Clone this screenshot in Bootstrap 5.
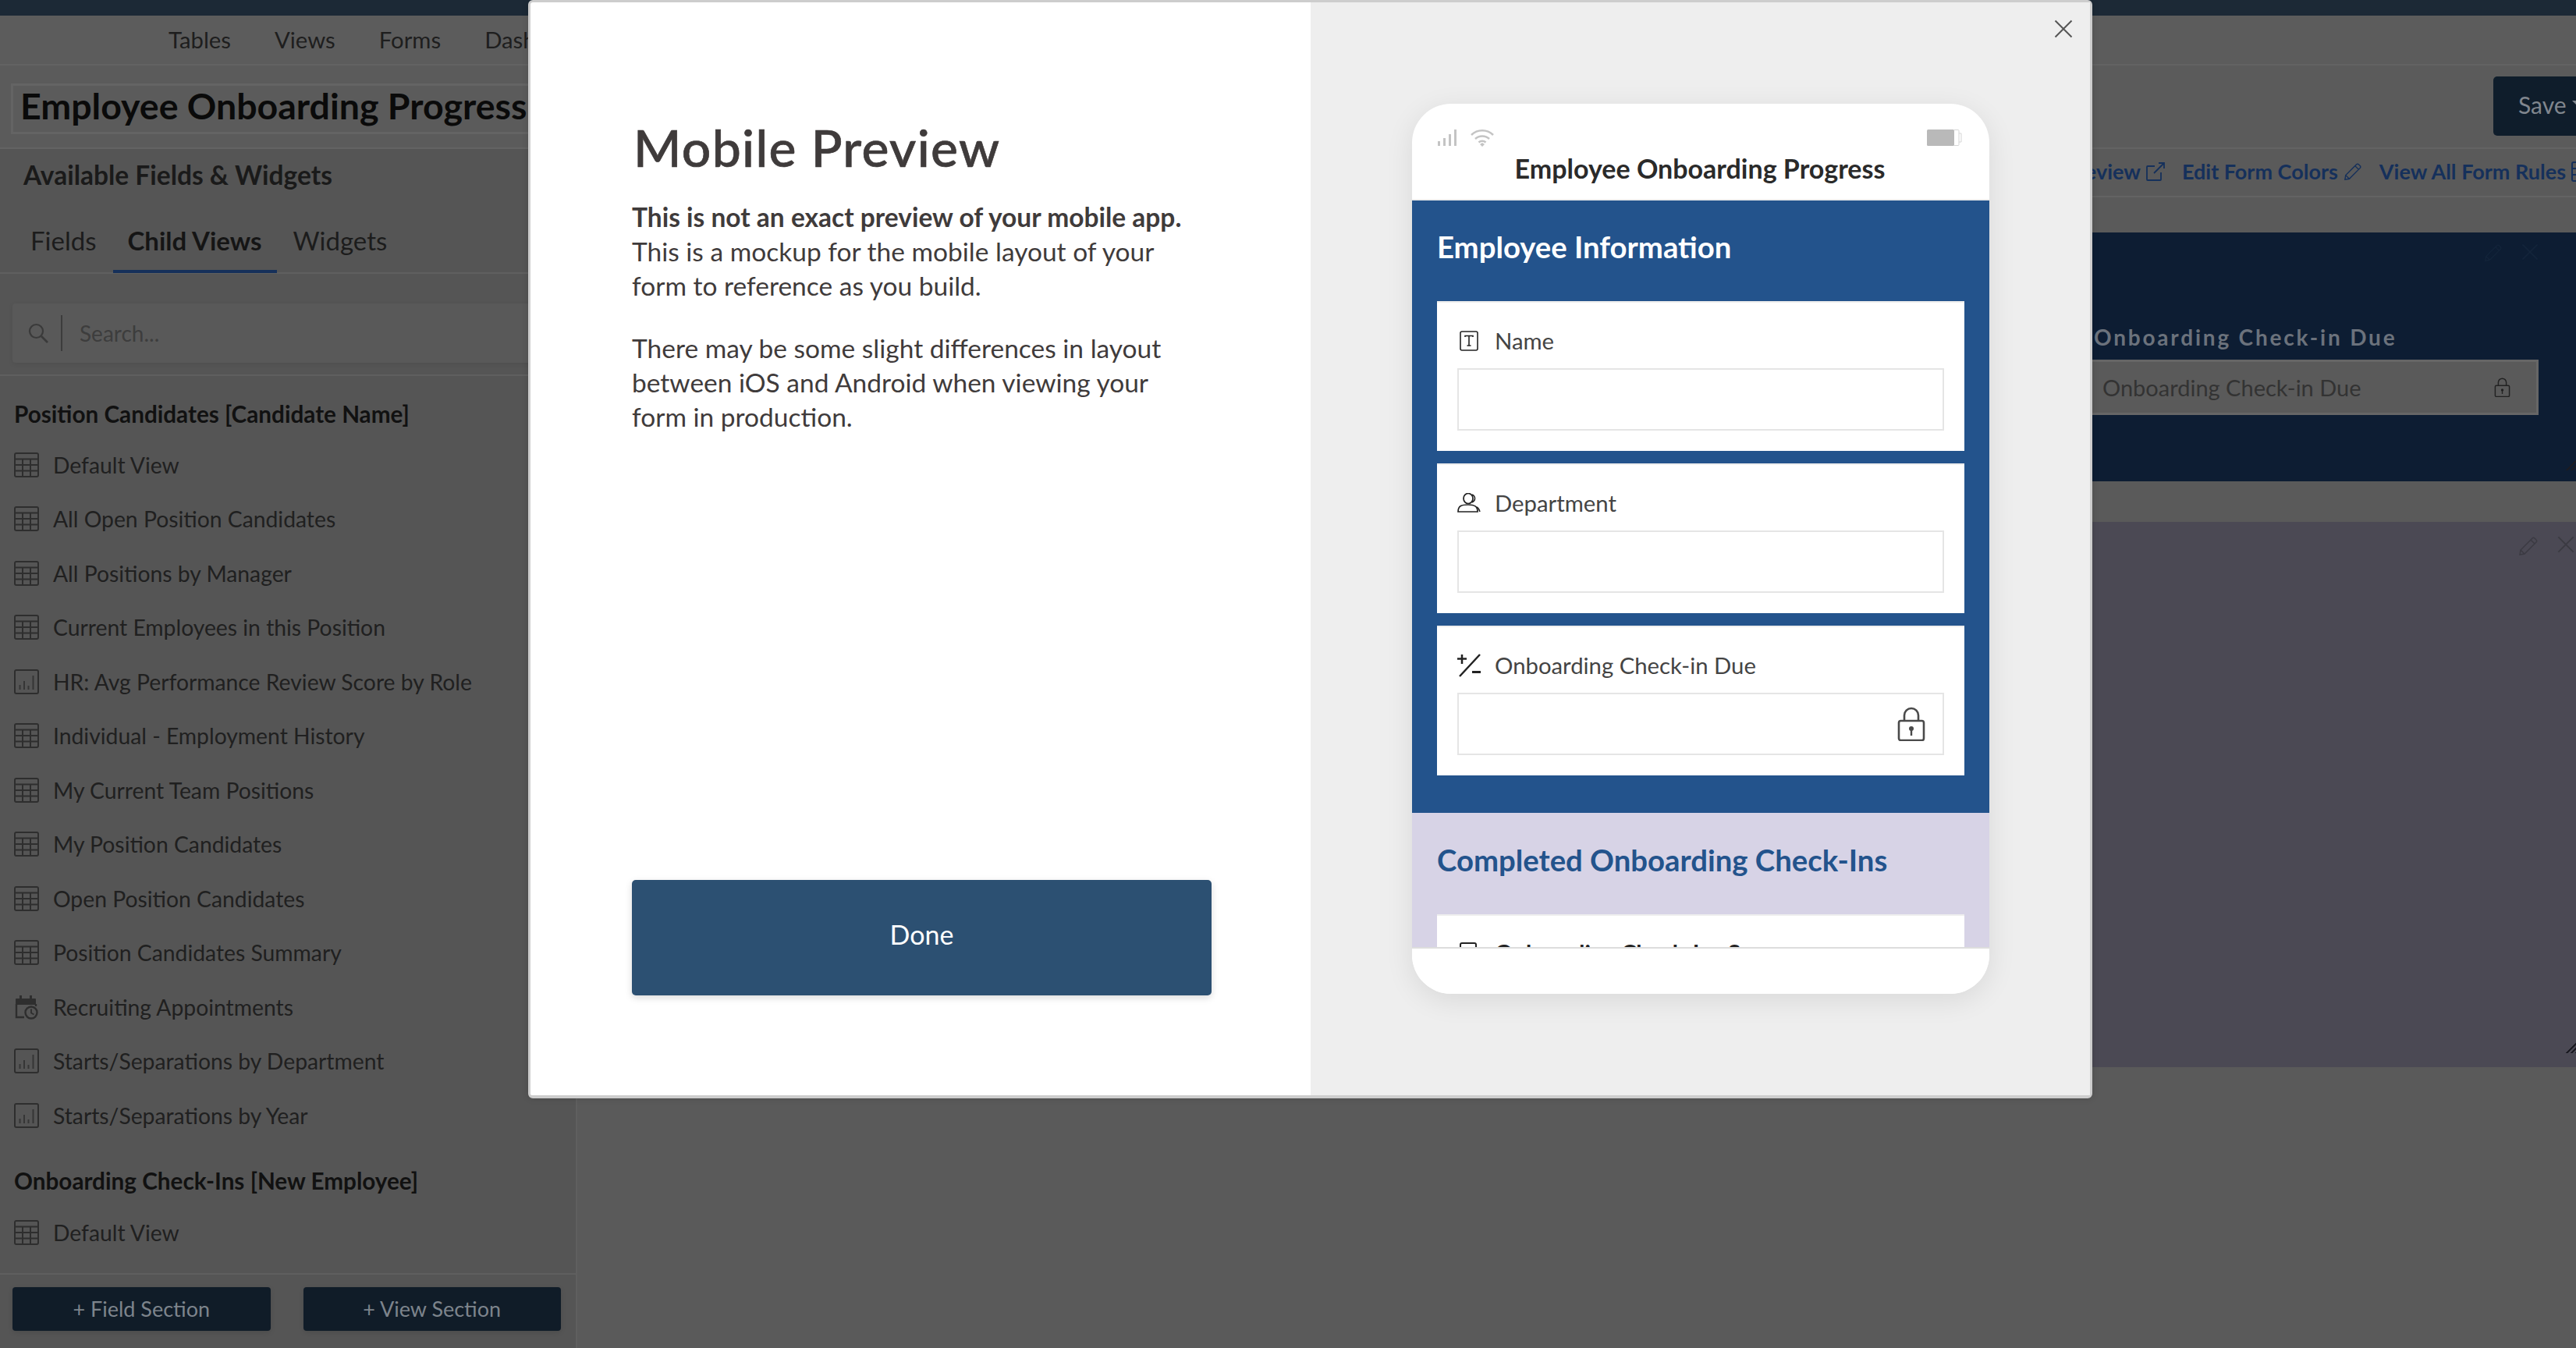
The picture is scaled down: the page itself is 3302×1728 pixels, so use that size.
<!DOCTYPE html>
<html lang="en">
  <head>
    <meta charset="UTF-8" />
    <meta name="viewport" content="width=device-width, initial-scale=1.0" />
    <title>Employee Onboarding Progress - Mobile Preview</title>
    <link rel="stylesheet" href="https://cdn.jsdelivr.net/npm/bootstrap@5.3.6/dist/css/bootstrap.min.css" />
    <style>
      body { margin: 0; background: #5a5a5a; font-family: "Lato", "Liberation Sans", sans-serif; }
      .app-shell { position: relative; width: 3302px; height: 1728px; overflow: hidden; background: #5a5a5a; }
      .top-strip { height: 20px; background: #1c2936; }
      .main-links { height: 64px; padding-left: 216px; gap: 56px; background: #5c5c5c; border-bottom: 2px solid #636363; font-size: 29.300px; color: #1e1e1e; }
      .title-row { height: 107px; border-bottom: 2px solid #636363; background: #5b5b5b; }
      .title-box { width: 900px; height: 65px; margin: 23px 0 0 14px; padding-left: 9px; border: 3px solid #646464; font-size: 46.500px; line-height: 51px; font-weight: 700; color: #0a0a0a; white-space: nowrap; }
      .save-btn { width: 130px; height: 76px; margin: 14px -24px 0 auto; padding: 0 0 3px 32px; text-align: left; border: 0; border-radius: 5px; background: #0f1d2b; color: #80868e; font-size: 30px; }
      .side-panel { width: 740px; flex: none; background: #555; border-right: 2px solid #5f5f5f; }
      .panel-title { height: 70px; line-height: 67px; padding-left: 30px; margin: 0; font-size: 33.500px; font-weight: 700; color: #1a1a1a; }
      .tab-strip { height: 90px; padding: 29px 0 0 20px; border-bottom: 2px solid #5f5f5f; gap: 2px; }
      .tab-link { height: 60px; padding: 0 19px; font-size: 33px; line-height: 37px; color: #1c1c1c; text-decoration: none; }
      .tab-link.is-active { font-weight: 700; color: #151515; border-bottom: 4px solid #16305a; }
      .search-area { height: 131px; padding: 38px 19px 0 16px; border-bottom: 2px solid #5f5f5f; }
      .search-box { height: 76px; background: #595959; border-radius: 4px; box-shadow: 0 2px 6px rgba(0,0,0,.08); color: #3d3d3d; font-size: 28px; }
      .search-box svg { margin-left: 20px; }
      .search-sep { width: 2px; height: 46px; margin: 0 22px 0 16px; background: #3c3c3c; }
      .field-list { padding: 29px 0 0 18px; overflow: hidden; }
      .group-head { height: 40px; line-height: 40px; margin: 0 0 10px; font-size: 29.700px; font-weight: 700; color: #111; }
      .group-head.is-next { margin: 29px 0 12px; }
      .field-row { height: 69.500px; gap: 18px; font-size: 28.300px; color: #202020; }
      .panel-foot { height: 96px; padding: 16px 19px 0 16px; border-top: 2px solid #5f5f5f; gap: 42px; }
      .foot-btn { flex: 1; height: 56px; padding: 0; border: 0; border-radius: 4px; background: #101c28; color: #7d848c; font-size: 27px; box-shadow: 0 2px 6px rgba(0,0,0,.12); }
      .work-area { min-width: 0; padding-left: 20px; }
      .link-bar { height: 62px; margin-left: -20px; margin-right: -18px; padding-bottom: 2px; border-bottom: 2px solid #636363; font-size: 27px; font-weight: 700; color: #15305b; }
      .link-bar span { margin-left: 22px; }
      .link-bar svg { margin-left: 7px; }
      .dark-band { position: relative; height: 319px; margin-top: 45px; padding: 0 48px 0 0; background: #0d1d33; }
      .band-tools { height: 113px; padding: 14px 0 0; gap: 24px; color: #13243a; }
      .band-field { width: 580px; }
      .band-label { height: 50px; padding-left: 10px; font-size: 28px; font-weight: 700; letter-spacing: 2.800px; color: #6b727c; }
      .band-input { height: 71px; padding: 0 33px 0 18px; background: #5a5a5a; border: 3px solid #666; font-size: 29px; color: #333; }
      .purple-band { position: relative; height: 699px; margin-top: 52px; padding: 18px 2px 0 0; background: #4b4954; color: #3b3a42; }
      .grip { position: absolute; width: 15px; height: 15px; background: repeating-linear-gradient(135deg, #1b1b22 0 2px, transparent 2px 4px); clip-path: polygon(100% 0, 100% 100%, 0 100%); }
      .grip-one { right: 0; bottom: 18px; }
      .grip-two { right: 0; bottom: 14px; }
      .preview-modal { position: absolute; left: 677px; top: 0; width: 2005px; height: 1408px; border: 3px solid #cdcdcd; border-bottom-width: 4px; border-radius: 6px; background: #fff; color: #3f3b3b; box-shadow: 0 0 8px rgba(0,0,0,.15); }
      .intro-col { width: 1000px; flex: none; padding: 143px 127px 128px 130px; }
      .intro-title { margin: 0 0 24px 2px; font-size: 66px; line-height: 86px; font-weight: 500; letter-spacing: 1.300px; color: #3f3b3b; -webkit-text-stroke: .7px #3f3b3b; }
      .intro-text { width: 725px; margin: 0 0 36px; font-size: 33.500px; line-height: 44px; font-weight: 400; color: #3f3b3b; }
      .done-btn { height: 148px; padding-bottom: 16px; border: 0; border-radius: 5px; background: #2c5072; color: #fff; font-size: 34px; box-shadow: 0 3px 10px rgba(0,0,0,.15); }
      .preview-col { position: relative; padding: 130px 128px 0 130px; background: #eee; }
      .close-x { position: absolute; top: 22px; right: 22px; padding: 0; border: 0; background: none; color: #555; line-height: 0; }
      .phone { width: 740px; height: 1141px; overflow: hidden; border-radius: 50px; background: #fff; box-shadow: 0 8px 36px rgba(0,0,0,.09); }
      .phone-head { height: 124px; flex: none; padding: 33px 34px 0 32px; border-bottom: 2px solid #eee; }
      .phone-title { margin-top: 7px; font-size: 34px; line-height: 42px; font-weight: 700; color: #2a2a2a; text-align: center; }
      .phone-body { height: 957px; flex: none; overflow: hidden; }
      .blue-sec { height: 785px; padding: 36px 32px 0; background: #23538c; }
      .sec-name { height: 50px; line-height: 47px; margin: 0 0 43px; font-size: 38.300px; font-weight: 700; }
      .blue-sec .sec-name { color: #fff; }
      .lav-sec { padding: 37px 32px 0; background: #d7d3e6; }
      .lav-sec .sec-name { height: 50px; margin-bottom: 43px; color: #23538c; }
      .form-card { height: 192px; margin-bottom: 16px; padding: 31px 26px 0; background: #fff; border-top: 2px solid #eee; }
      .card-label { height: 36px; margin-bottom: 17px; gap: 18px; font-size: 29.300px; line-height: 36px; color: #444; }
      .card-label svg { flex: none; color: #222; }
      .card-label.is-clipped { font-weight: 700; color: #222; margin-top: -2px; }
      .card-input { position: relative; height: 80px; border: 2px solid #e5e5e5; border-radius: 0; }
      .card-lock { position: absolute; right: 22px; top: 16px; color: #4a4a4a; }
      .phone-foot { height: 60px; flex: none; border-top: 2px solid #ddd; background: #fff; }
    </style>
  </head>
  <body>
    <svg width="0" height="0" class="position-absolute">
      <symbol id="ico-table" viewBox="0 0 32 32"><rect x="1" y="1" width="30" height="30" rx="2" fill="none" stroke="currentColor" stroke-width="2"/><path d="M1 8.500h30M1 16h30M1 23.500h30M11 8.500V31M21 8.500V31" fill="none" stroke="currentColor" stroke-width="2"/></symbol>
      <symbol id="ico-chart" viewBox="0 0 32 32"><rect x="1" y="1" width="30" height="30" rx="2" fill="none" stroke="currentColor" stroke-width="2"/><path d="M7.500 20v6M13 15v11M18.500 21v5M24.500 8v18" fill="none" stroke="currentColor" stroke-width="2" opacity=".8"/></symbol>
      <symbol id="ico-cal" viewBox="0 0 32 32"><path d="M3 5h24a1 1 0 0 1 1 1v7H2V6a1 1 0 0 1 1-1zM7 1h3v5H7zM20 1h3v5h-3z" fill="currentColor"/><path d="M3 12v17h10" fill="none" stroke="currentColor" stroke-width="2.400"/><path d="M28 12v3" fill="none" stroke="currentColor" stroke-width="2.400"/><circle cx="22" cy="23" r="7.500" fill="none" stroke="currentColor" stroke-width="2.400"/><path d="M22 18.500v5l3.500 2" fill="none" stroke="currentColor" stroke-width="1.800"/></symbol>
      <symbol id="ico-lock" viewBox="0 0 36 44"><path d="M9 19V11a9 9 0 0 1 18 0v8" fill="none" stroke="currentColor" stroke-width="2.600"/><rect x="2" y="18" width="32" height="25" rx="2.500" fill="none" stroke="currentColor" stroke-width="2.600"/><circle cx="18" cy="28" r="3" fill="currentColor"/><path d="M18 29v8" stroke="currentColor" stroke-width="2.400"/></symbol>
      <symbol id="ico-pencil" viewBox="0 0 26 26"><path d="M2 24l1-6L18 3a2 2 0 0 1 3 0l2 2a2 2 0 0 1 0 3L8 23zM16 5l5 5M3 18l5 5" fill="none" stroke="currentColor" stroke-width="1.500"/></symbol>
      <symbol id="ico-x" viewBox="0 0 24 24"><path d="M1.500 1.500l21 21M22.500 1.500l-21 21" fill="none" stroke="currentColor" stroke-width="2"/></symbol>
    </svg>

    <div class="app-shell d-flex flex-column">
      <div class="top-strip"></div>
      <nav class="main-links d-flex align-items-center flex-none">
        <span>Tables</span><span>Views</span><span>Forms</span><span>Dashboards</span>
      </nav>
      <div class="title-row d-flex">
        <div class="title-box">Employee Onboarding Progress</div>
        <button class="save-btn dropdown-toggle" type="button">Save</button>
      </div>

      <div class="d-flex flex-grow-1" style="min-height:0">
        <aside class="side-panel d-flex flex-column">
          <h2 class="panel-title">Available Fields &amp; Widgets</h2>
          <div class="tab-strip d-flex">
            <a class="tab-link" href="#">Fields</a>
            <a class="tab-link is-active" href="#">Child Views</a>
            <a class="tab-link" href="#">Widgets</a>
          </div>
          <div class="search-area">
            <div class="search-box d-flex align-items-center">
              <svg width="26" height="26" viewBox="0 0 26 26"><circle cx="10.500" cy="10.500" r="8.500" fill="none" stroke="#3a3a3a" stroke-width="2.200"/><path d="M17 17l8 8" stroke="#3a3a3a" stroke-width="2.600"/></svg>
              <span class="search-sep"></span>
              <span>Search...</span>
            </div>
          </div>
          <div id="fieldList" class="field-list flex-grow-1"></div>
          <div class="panel-foot d-flex">
            <button class="foot-btn" type="button">+ Field Section</button>
            <button class="foot-btn" type="button">+ View Section</button>
          </div>
        </aside>

        <main class="work-area flex-grow-1">
          <div class="link-bar d-flex align-items-center justify-content-end">
            <span>Mobile Preview</span>
            <svg width="24" height="24" viewBox="0 0 24 24"><path d="M19 13v9a1 1 0 0 1-1 1H2a1 1 0 0 1-1-1V6a1 1 0 0 1 1-1h9M10 14L23 1M16 1h7v7" fill="none" stroke="currentColor" stroke-width="1.800"/></svg>
            <span>Edit Form Colors</span>
            <svg width="24" height="24"><use href="#ico-pencil"/></svg>
            <span>View All Form Rules</span>
            <svg width="24" height="26" viewBox="0 0 24 26"><rect x="1" y="1" width="22" height="24" rx="2" fill="none" stroke="currentColor" stroke-width="2"/><path d="M1 9h22M1 17h22" stroke="currentColor" stroke-width="2"/></svg>
          </div>
          <section class="dark-band d-flex flex-column align-items-end">
            <div class="band-tools d-flex">
              <svg width="24" height="24"><use href="#ico-pencil"/></svg>
              <svg width="22" height="22"><use href="#ico-x"/></svg>
            </div>
            <div class="band-field">
              <div class="band-label d-flex align-items-start">Onboarding Check-in Due</div>
              <div class="band-input d-flex align-items-center justify-content-between">
                <span>Onboarding Check-in Due</span>
                <svg width="21" height="25" style="color:#222"><use href="#ico-lock"/></svg>
              </div>
            </div>
            <span class="grip grip-two"></span>
          </section>
          <section class="purple-band d-flex justify-content-end gap-4">
            <svg width="26" height="26"><use href="#ico-pencil"/></svg>
            <svg width="22" height="22"><use href="#ico-x"/></svg>
            <span class="grip grip-one"></span>
          </section>
        </main>
      </div>

      <div class="preview-modal d-flex">
        <div class="intro-col d-flex flex-column">
          <h1 class="intro-title">Mobile Preview</h1>
          <p class="intro-text"><strong class="fw-bold">This is not an exact preview of your mobile app.</strong><br>This is a mockup for the mobile layout of your form to reference as you build.</p>
          <p class="intro-text">There may be some slight differences in layout between iOS and Android when viewing your form in production.</p>
          <button class="done-btn btn mt-auto" type="button">Done</button>
        </div>
        <div class="preview-col flex-grow-1">
          <button class="close-x" type="button" aria-label="Close"><svg width="24" height="24"><use href="#ico-x"/></svg></button>
          <div class="phone d-flex flex-column">
            <div class="phone-head">
              <div class="d-flex align-items-start">
                <svg width="26" height="21" viewBox="0 0 26 21"><path d="M1 15h3v6H1zM8 11h3v10H8zM15 6h3v15h-3zM22 0h3v21h-3z" fill="#c4c4c4"/></svg>
                <svg class="ms-3" width="32" height="22" viewBox="0 0 32 22"><path d="M2 7a20 20 0 0 1 28 0M7 12a13 13 0 0 1 18 0M11.500 16.500a6.500 6.500 0 0 1 9 0" fill="none" stroke="#c4c4c4" stroke-width="2.500"/><path d="M16 22l-3-3 3-2 3 2z" fill="#c4c4c4"/></svg>
                <svg class="ms-auto" width="46" height="21" viewBox="0 0 46 21"><rect width="35" height="21" rx="1.500" fill="#b9b9b9"/><path d="M35 .5h5a1 1 0 0 1 1 1v18a1 1 0 0 1-1 1h-5M41 5h3v11h-3" fill="none" stroke="#d5d5d5" stroke-width="1"/></svg>
              </div>
              <div class="phone-title">Employee Onboarding Progress</div>
            </div>
            <div class="phone-body">
              <section class="blue-sec">
                <h3 class="sec-name">Employee Information</h3>
                <div class="form-card">
                  <div class="card-label d-flex align-items-center">
                    <svg width="30" height="26" viewBox="-3 0 30 26"><rect x="1" y="1" width="22" height="24" rx="2" fill="none" stroke="currentColor" stroke-width="1.600"/><path d="M7 8V6.500h10V8M12 6.500V19M9.500 19h5" fill="none" stroke="currentColor" stroke-width="1.600"/></svg>
                    <span>Name</span>
                  </div>
                  <input class="card-input form-control" type="text" aria-label="Name" />
                </div>
                <div class="form-card">
                  <div class="card-label d-flex align-items-center">
                    <svg width="30" height="26" viewBox="0 0 30 26"><ellipse cx="14" cy="7" rx="6" ry="6.500" fill="none" stroke="currentColor" stroke-width="1.700"/><path d="M19 2a8 6 0 0 1 0 10" fill="none" stroke="currentColor" stroke-width="1.500"/><path d="M1 24c0-8 5-9 13-9s12 2 12 9z" fill="none" stroke="currentColor" stroke-width="1.700"/><path d="M25 18c2 1 3 3 4 6" fill="none" stroke="currentColor" stroke-width="1.500"/></svg>
                    <span>Department</span>
                  </div>
                  <input class="card-input form-control" type="text" aria-label="Department" />
                </div>
                <div class="form-card">
                  <div class="card-label d-flex align-items-center">
                    <svg width="30" height="30" viewBox="0 0 30 30"><path d="M6 1v12M0 6.500h12M3 29L29 1" fill="none" stroke="currentColor" stroke-width="2.500"/><path d="M19 23.500h11" stroke="currentColor" stroke-width="3"/></svg>
                    <span>Onboarding Check-in Due</span>
                  </div>
                  <div class="card-input">
                    <svg class="card-lock" width="36" height="44"><use href="#ico-lock"/></svg>
                  </div>
                </div>
              </section>
              <section class="lav-sec">
                <h3 class="sec-name">Completed Onboarding Check-Ins</h3>
                <div class="form-card">
                  <div class="card-label is-clipped d-flex align-items-center">
                    <svg width="30" height="26" viewBox="-3 0 30 26"><rect x="1" y="1" width="20" height="24" rx="2" fill="none" stroke="currentColor" stroke-width="2"/></svg>
                    <span>Onboarding Check-Ins Score</span>
                  </div>
                </div>
              </section>
            </div>
            <div class="phone-foot"></div>
          </div>
        </div>
      </div>
    </div>

    <script>
const childViews = [
  {kind: "head", name: "Position Candidates [Candidate Name]"},
  {kind: "table", name: "Default View"},
  {kind: "table", name: "All Open Position Candidates"},
  {kind: "table", name: "All Positions by Manager"},
  {kind: "table", name: "Current Employees in this Position"},
  {kind: "chart", name: "HR: Avg Performance Review Score by Role"},
  {kind: "table", name: "Individual - Employment History"},
  {kind: "table", name: "My Current Team Positions"},
  {kind: "table", name: "My Position Candidates"},
  {kind: "table", name: "Open Position Candidates"},
  {kind: "table", name: "Position Candidates Summary"},
  {kind: "cal", name: "Recruiting Appointments"},
  {kind: "chart", name: "Starts/Separations by Department"},
  {kind: "chart", name: "Starts/Separations by Year"},
  {kind: "head", name: "Onboarding Check-Ins [New Employee]", next: true},
  {kind: "table", name: "Default View"},
];

const fieldList = document.querySelector("#fieldList")

for (let i = 0; i < childViews.length; i++) {
  const item = childViews[i]
  const div = document.createElement("div")
  if (item.kind === "head") {
    div.className = item.next ? "group-head is-next" : "group-head"
    div.textContent = item.name
  } else {
    div.className = "field-row d-flex align-items-center"
    div.innerHTML = `<svg width="32" height="32" style="color:#2e2e2e"><use href="#ico-${item.kind}"/></svg><span>${item.name}</span>`
  }
  fieldList.appendChild(div)
}
    </script>
    <script src="https://cdn.jsdelivr.net/npm/bootstrap@5.3.6/dist/js/bootstrap.bundle.min.js"></script>
  </body>
</html>
